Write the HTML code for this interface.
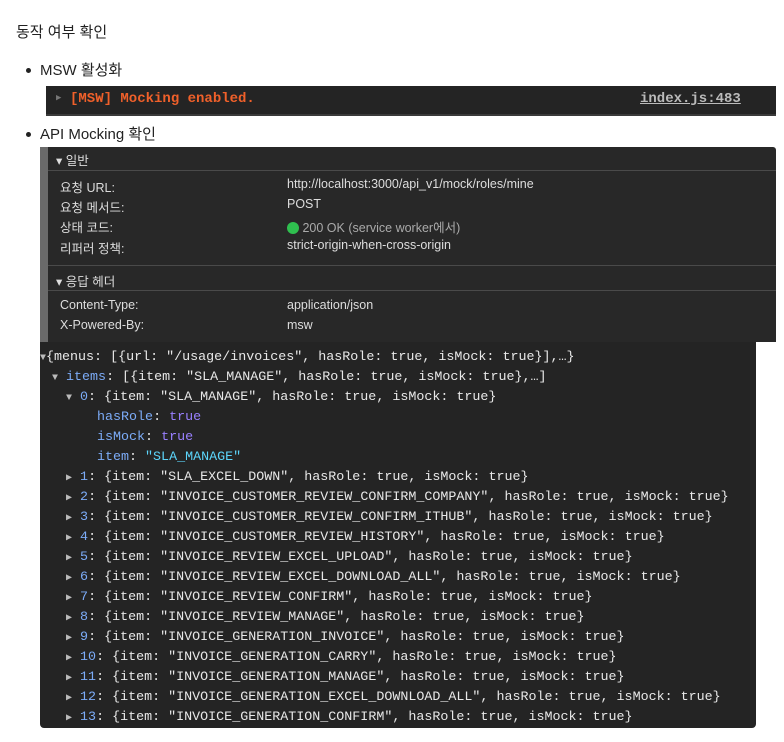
<!DOCTYPE html>
<html><head><meta charset="utf-8"><style>
body{margin:0;width:784px;height:742px;background:#fff;font-family:"Liberation Sans","Noto Sans CJK KR",sans-serif;color:#222;position:relative;overflow:hidden}
.a{position:absolute}
.t{font-size:15px}
.dot{position:absolute;width:5px;height:5px;border-radius:50%;background:#222}
.con{left:46px;top:86px;width:730px;height:28px;background:#242424;border-bottom:2px solid #3a3a3a;font-family:"Liberation Mono",monospace;font-weight:bold;font-size:14px}
.req{left:40px;top:147px;width:736px;height:195px;background:#282828;border-radius:3px 3px 0 0}
.strip{left:40px;top:147px;width:8px;height:195px;background:#6a6a6a}
.r{position:absolute;font-size:12.5px;color:#ddd;font-family:"Liberation Sans","Noto Sans CJK KR",sans-serif}
.sep{position:absolute;left:48px;width:728px;height:1px;background:#4a4a4a}
.js{left:40px;top:342px;width:716px;height:386px;background:#242424;border-radius:0 0 4px 4px}
.l{position:absolute;font-family:"Liberation Mono",monospace;font-size:13.35px;color:#e8e8e8;white-space:pre}
.k{color:#7cacf8}.v{color:#9980ff}.s{color:#5cd5fb}
.tri{color:#bbb;font-size:10px}
</style></head><body>
<div class="a t" style="left:16px;top:21px">동작 여부 확인</div>
<div class="dot" style="left:26px;top:68px"></div>
<div class="a t" style="left:40px;top:59px">MSW 활성화</div>
<div class="a con"><span class="a" style="left:10px;top:7px;color:#777;font-size:9px">▶</span><span class="a" style="left:24px;top:5px;color:#f0602a">[MSW] Mocking enabled.</span><span class="a" style="left:594px;top:5px;color:#bbb;text-decoration:underline">index.js:483</span></div>
<div class="dot" style="left:26px;top:132px"></div>
<div class="a t" style="left:40px;top:123px">API Mocking 확인</div>
<div class="a req"></div><div class="a strip"></div>
<div class="r" style="left:56px;top:150px">▾ 일반</div>
<div class="sep" style="top:170px"></div>
<div class="r" style="left:60px;top:177px">요청 URL:</div><div class="r" style="left:287px;top:177px">http://localhost:3000/api_v1/mock/roles/mine</div>
<div class="r" style="left:60px;top:197px">요청 메서드:</div><div class="r" style="left:287px;top:197px">POST</div>
<div class="r" style="left:60px;top:217px">상태 코드:</div><div class="r" style="left:287px;top:217px;color:#aaa"><span style="display:inline-block;width:12px;height:12px;border-radius:50%;background:#2fbf4f;vertical-align:-2px"></span> 200 OK (service worker에서)</div>
<div class="r" style="left:60px;top:238px">리퍼러 정책:</div><div class="r" style="left:287px;top:238px">strict-origin-when-cross-origin</div>
<div class="sep" style="top:265px"></div>
<div class="r" style="left:56px;top:271px">▾ 응답 헤더</div>
<div class="sep" style="top:290px"></div>
<div class="r" style="left:60px;top:298px">Content-Type:</div><div class="r" style="left:287px;top:298px">application/json</div>
<div class="r" style="left:60px;top:318px">X-Powered-By:</div><div class="r" style="left:287px;top:318px">msw</div>
<div class="a js"></div>
<div class="l" style="left:40px;top:350px"><span class="tri">▼</span>{menus: [{url: "/usage/invoices", hasRole: true, isMock: true}],…}</div>
<div class="l" style="left:52px;top:370px"><span class="tri">▼</span> <span class="k">items</span>: [{item: "SLA_MANAGE", hasRole: true, isMock: true},…]</div>
<div class="l" style="left:66px;top:390px"><span class="tri">▼</span> <span class="k">0</span>: {item: "SLA_MANAGE", hasRole: true, isMock: true}</div>
<div class="l" style="left:97px;top:410px"><span class="k">hasRole</span>: <span class="v">true</span></div>
<div class="l" style="left:97px;top:430px"><span class="k">isMock</span>: <span class="v">true</span></div>
<div class="l" style="left:97px;top:450px"><span class="k">item</span>: <span class="s">"SLA_MANAGE"</span></div>
<div class="l" style="left:66px;top:470px"><span class="tri">▶</span> <span class="k">1</span>: {item: "SLA_EXCEL_DOWN", hasRole: true, isMock: true}</div>
<div class="l" style="left:66px;top:490px"><span class="tri">▶</span> <span class="k">2</span>: {item: "INVOICE_CUSTOMER_REVIEW_CONFIRM_COMPANY", hasRole: true, isMock: true}</div>
<div class="l" style="left:66px;top:510px"><span class="tri">▶</span> <span class="k">3</span>: {item: "INVOICE_CUSTOMER_REVIEW_CONFIRM_ITHUB", hasRole: true, isMock: true}</div>
<div class="l" style="left:66px;top:530px"><span class="tri">▶</span> <span class="k">4</span>: {item: "INVOICE_CUSTOMER_REVIEW_HISTORY", hasRole: true, isMock: true}</div>
<div class="l" style="left:66px;top:550px"><span class="tri">▶</span> <span class="k">5</span>: {item: "INVOICE_REVIEW_EXCEL_UPLOAD", hasRole: true, isMock: true}</div>
<div class="l" style="left:66px;top:570px"><span class="tri">▶</span> <span class="k">6</span>: {item: "INVOICE_REVIEW_EXCEL_DOWNLOAD_ALL", hasRole: true, isMock: true}</div>
<div class="l" style="left:66px;top:590px"><span class="tri">▶</span> <span class="k">7</span>: {item: "INVOICE_REVIEW_CONFIRM", hasRole: true, isMock: true}</div>
<div class="l" style="left:66px;top:610px"><span class="tri">▶</span> <span class="k">8</span>: {item: "INVOICE_REVIEW_MANAGE", hasRole: true, isMock: true}</div>
<div class="l" style="left:66px;top:630px"><span class="tri">▶</span> <span class="k">9</span>: {item: "INVOICE_GENERATION_INVOICE", hasRole: true, isMock: true}</div>
<div class="l" style="left:66px;top:650px"><span class="tri">▶</span> <span class="k">10</span>: {item: "INVOICE_GENERATION_CARRY", hasRole: true, isMock: true}</div>
<div class="l" style="left:66px;top:670px"><span class="tri">▶</span> <span class="k">11</span>: {item: "INVOICE_GENERATION_MANAGE", hasRole: true, isMock: true}</div>
<div class="l" style="left:66px;top:690px"><span class="tri">▶</span> <span class="k">12</span>: {item: "INVOICE_GENERATION_EXCEL_DOWNLOAD_ALL", hasRole: true, isMock: true}</div>
<div class="l" style="left:66px;top:710px"><span class="tri">▶</span> <span class="k">13</span>: {item: "INVOICE_GENERATION_CONFIRM", hasRole: true, isMock: true}</div>
</body></html>
